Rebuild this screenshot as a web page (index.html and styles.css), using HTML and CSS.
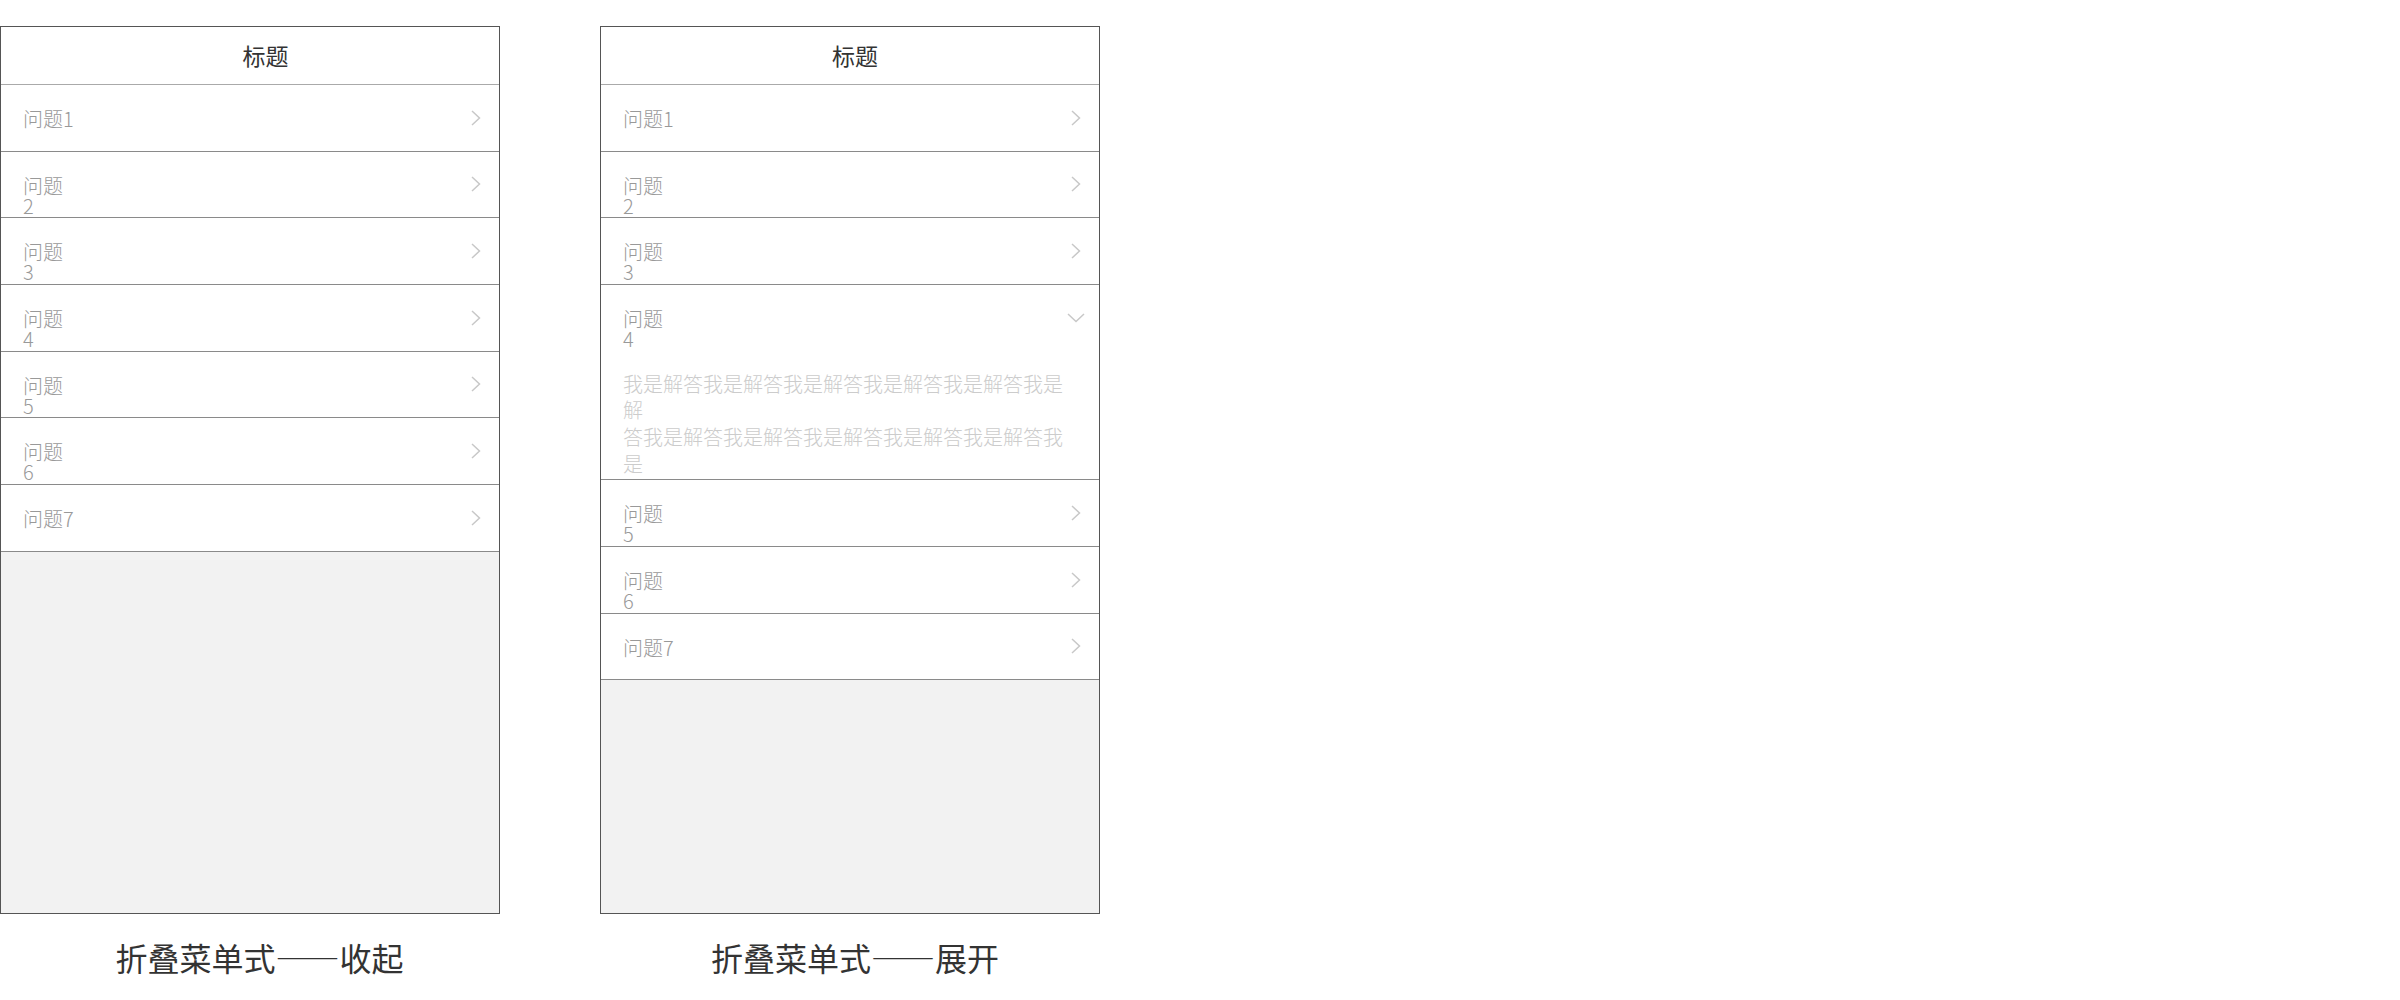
FILE: index.html
```html
<!DOCTYPE html>
<html lang="zh-CN">
<head>
<meta charset="utf-8">
<title>折叠菜单式</title>
<link rel="stylesheet" href="styles.css">
</head>
<body>
<div class="page">
  <section class="panel">
    <div class="phone">
      <div class="header header-left">标题</div>
      <div class="item"><div class="item-head"><span class="q">问题1</span><span class="icon"><svg width="10" height="16" viewBox="0 0 10 16"><path d="M1 1 L8.5 8 L1 15" fill="none" stroke="#c8c8c8" stroke-width="1.5"/></svg></span></div></div>
      <div class="item"><div class="item-head"><span class="q">问题<br>2</span><span class="icon"><svg width="10" height="16" viewBox="0 0 10 16"><path d="M1 1 L8.5 8 L1 15" fill="none" stroke="#c8c8c8" stroke-width="1.5"/></svg></span></div></div>
      <div class="item"><div class="item-head"><span class="q">问题<br>3</span><span class="icon"><svg width="10" height="16" viewBox="0 0 10 16"><path d="M1 1 L8.5 8 L1 15" fill="none" stroke="#c8c8c8" stroke-width="1.5"/></svg></span></div></div>
      <div class="item"><div class="item-head"><span class="q">问题<br>4</span><span class="icon"><svg width="10" height="16" viewBox="0 0 10 16"><path d="M1 1 L8.5 8 L1 15" fill="none" stroke="#c8c8c8" stroke-width="1.5"/></svg></span></div></div>
      <div class="item"><div class="item-head"><span class="q">问题<br>5</span><span class="icon"><svg width="10" height="16" viewBox="0 0 10 16"><path d="M1 1 L8.5 8 L1 15" fill="none" stroke="#c8c8c8" stroke-width="1.5"/></svg></span></div></div>
      <div class="item"><div class="item-head"><span class="q">问题<br>6</span><span class="icon"><svg width="10" height="16" viewBox="0 0 10 16"><path d="M1 1 L8.5 8 L1 15" fill="none" stroke="#c8c8c8" stroke-width="1.5"/></svg></span></div></div>
      <div class="item"><div class="item-head"><span class="q">问题7</span><span class="icon"><svg width="10" height="16" viewBox="0 0 10 16"><path d="M1 1 L8.5 8 L1 15" fill="none" stroke="#c8c8c8" stroke-width="1.5"/></svg></span></div></div>
      <div class="filler"></div>
    </div>
    <div class="caption caption-left">折叠菜单式——收起</div>
  </section>

  <section class="panel">
    <div class="phone">
      <div class="header header-right">标题</div>
      <div class="item"><div class="item-head"><span class="q">问题1</span><span class="icon"><svg width="10" height="16" viewBox="0 0 10 16"><path d="M1 1 L8.5 8 L1 15" fill="none" stroke="#c8c8c8" stroke-width="1.5"/></svg></span></div></div>
      <div class="item"><div class="item-head"><span class="q">问题<br>2</span><span class="icon"><svg width="10" height="16" viewBox="0 0 10 16"><path d="M1 1 L8.5 8 L1 15" fill="none" stroke="#c8c8c8" stroke-width="1.5"/></svg></span></div></div>
      <div class="item"><div class="item-head"><span class="q">问题<br>3</span><span class="icon"><svg width="10" height="16" viewBox="0 0 10 16"><path d="M1 1 L8.5 8 L1 15" fill="none" stroke="#c8c8c8" stroke-width="1.5"/></svg></span></div></div>
      <div class="item item-open">
        <div class="item-head"><span class="q">问题<br>4</span><span class="icon"><svg width="18" height="10" viewBox="0 0 18 10"><path d="M1 1 L9 8.5 L17 1" fill="none" stroke="#c8c8c8" stroke-width="1.5"/></svg></span></div>
        <div class="answer">我是解答我是解答我是解答我是解答我是解答我是解<br>答我是解答我是解答我是解答我是解答我是解答我是</div>
      </div>
      <div class="item"><div class="item-head"><span class="q">问题<br>5</span><span class="icon"><svg width="10" height="16" viewBox="0 0 10 16"><path d="M1 1 L8.5 8 L1 15" fill="none" stroke="#c8c8c8" stroke-width="1.5"/></svg></span></div></div>
      <div class="item"><div class="item-head"><span class="q">问题<br>6</span><span class="icon"><svg width="10" height="16" viewBox="0 0 10 16"><path d="M1 1 L8.5 8 L1 15" fill="none" stroke="#c8c8c8" stroke-width="1.5"/></svg></span></div></div>
      <div class="item"><div class="item-head"><span class="q">问题7</span><span class="icon"><svg width="10" height="16" viewBox="0 0 10 16"><path d="M1 1 L8.5 8 L1 15" fill="none" stroke="#c8c8c8" stroke-width="1.5"/></svg></span></div></div>
      <div class="filler"></div>
    </div>
    <div class="caption caption-right">折叠菜单式——展开</div>
  </section>
</div>
</body>
</html>
```

FILE: styles.css
```css
html, body {
  margin: 0;
  padding: 0;
  background: #ffffff;
}

body {
  font-family: "Noto Sans CJK SC", "Noto Sans", sans-serif;
}

.page {
  display: flex;
  align-items: flex-start;
  gap: 100px;
  padding-top: 26px;
}

.panel {
  width: 500px;
  display: flex;
  flex-direction: column;
}

.phone {
  box-sizing: border-box;
  height: 888px;
  border: 1px solid #555555;
  display: flex;
  flex-direction: column;
  background: #ffffff;
}

.header {
  box-sizing: border-box;
  height: 58px;
  border-bottom: 1px solid #aaaaaa;
  font-size: 23px;
  line-height: 57px;
  color: #333333;
  text-align: center;
}

.header-left {
  padding-left: 31px;
}

.header-right {
  padding-left: 10px;
}

.item {
  border-bottom: 1px solid #8a8a8a;
}

.item-head {
  box-sizing: border-box;
  height: 65.67px;
  display: flex;
  justify-content: space-between;
  align-items: center;
  padding-left: 22px;
  padding-right: 14px;
}

.q {
  align-self: flex-start;
  margin-top: 24px;
  font-size: 20px;
  font-weight: 300;
  line-height: 20px;
  color: #999999;
}

.icon {
  width: 18px;
  display: flex;
  justify-content: center;
  align-items: center;
}

.icon svg {
  display: block;
}

.answer {
  padding: 20px 30px 2px 22px;
  font-size: 20px;
  font-weight: 300;
  line-height: 26.67px;
  color: #cccccc;
}

.filler {
  flex: 1;
  background: #f2f2f2;
}

.caption {
  margin-top: 23px;
  font-size: 32px;
  line-height: 40px;
  color: #333333;
  text-align: center;
}

.caption-left {
  padding-left: 19px;
}

.caption-right {
  padding-left: 10px;
}
```
